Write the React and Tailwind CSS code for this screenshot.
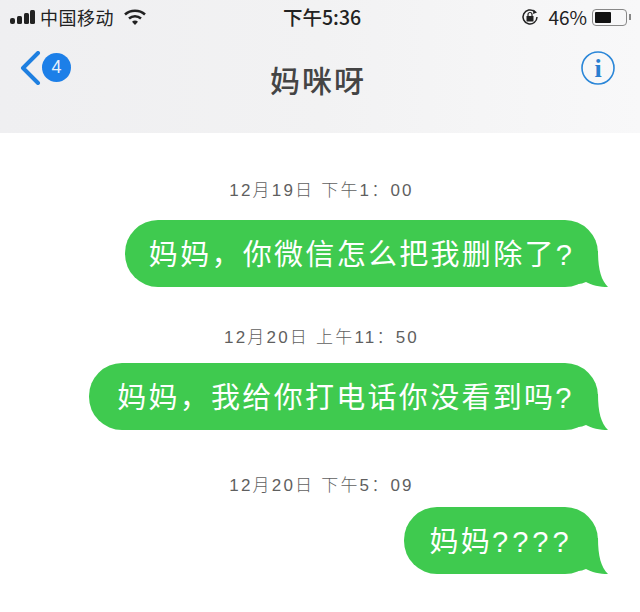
const font = { fontFamily: '"Noto Sans CJK SC", "Liberation Sans", sans-serif' };
const latinFirst = { fontFamily: '"Liberation Sans", "Noto Sans CJK SC", sans-serif' };

function Bubble({ width, className = '', children }) {
  return (
    <div className={`relative ml-auto mr-[42px] h-[67px] pt-[4px] rounded-[33px] bg-[#3fca4f] flex items-center justify-center text-white text-[29px] tracking-[2.3px] ${className}`} style={{ width, ...latinFirst }}>
      <span className="relative z-10">{children}</span>
      <svg className="absolute right-[-10px] bottom-0" width="30" height="36" viewBox="0 0 30 36">
        <path d="M0 0 L20 0 C20 18 23 29 30 36 C22 36 13 34 8 31 C5 32 3 33 0 33 Z" fill="#3fca4f" />
      </svg>
    </div>
  );
}

function Stamp({ children }) {
  return <p className="pt-[1px] pl-[3px] text-center text-[17px] leading-[24px] tracking-[2.2px] text-[#5f5f5f] font-light" style={latinFirst}>{children}</p>;
}

export default function App() {
  return (
    <div className="w-[640px] h-[612px] bg-white overflow-hidden" style={font}>
      <header className="h-[133px] bg-gradient-to-r from-[#efeff1] via-[#f2f2f3] to-[#f8f8f9] px-[10px]">
        {/* status bar */}
        <div className="h-[34px] flex items-center justify-between text-[#222]">
          <div className="flex items-center">
            <svg width="25" height="16" viewBox="0 0 25 16" fill="#222">
              <rect x="0" y="9" width="5" height="6" rx="2" />
              <rect x="7" y="7" width="5" height="8" rx="1.5" />
              <rect x="14" y="4" width="5" height="11" rx="1.5" />
              <rect x="20" y="1" width="5" height="14" rx="1.5" />
            </svg>
            <span className="ml-[5px] text-[18px] tracking-[0.5px]">中国移动</span>
            <svg className="ml-[10px]" width="22" height="16" viewBox="0 0 22 16" fill="none" stroke="#222" strokeWidth="2.6">
              <path d="M1 5.5 C6.5 0.5 15.5 0.5 21 5.5" />
              <path d="M5 9.5 C8.5 6.5 13.5 6.5 17 9.5" />
              <path d="M8 12.8 C9.8 11.2 12.2 11.2 14 12.8 L11 16 Z" fill="#222" stroke="none" />
            </svg>
          </div>
          <span className="absolute left-[283px] text-[19.5px] font-medium">下午5:36</span>
          <div className="flex items-center mr-[-1px]">
            <svg width="18" height="18" viewBox="0 0 18 18" fill="none" stroke="#222" strokeWidth="1.5">
              <path d="M16 9 A7 7 0 1 1 13.5 3.6" />
              <path d="M12.5 1.5 L16 4.5 L12 6 Z" fill="#222" stroke="none" />
              <rect x="5.5" y="8" width="7" height="5.5" fill="#222" stroke="none" />
              <path d="M7 8 V6.5 A2 2 0 0 1 11 6.5 V8" strokeWidth="1.2" />
            </svg>
            <span className="ml-[9px] text-[19px]">46%</span>
            <div className="ml-[5px] w-[35px] h-[17px] rounded-[4px] border border-[#888] p-[2px]">
              <div className="w-[16px] h-full bg-[#111] rounded-[1px]" />
            </div>
            <div className="ml-[2px] w-[2px] h-[6px] bg-[#888]" />
          </div>
        </div>
        {/* nav */}
        <div className="relative flex items-start justify-between pt-[17px] px-[10px]">
          <div className="flex items-center">
            <svg width="22" height="34" viewBox="0 0 22 34" fill="none" stroke="#1e7fe0" strokeWidth="4" strokeLinecap="round" strokeLinejoin="round">
              <path d="M18 2 L3 17 L18 32" />
            </svg>
            <div className="mb-[2px] w-[29px] h-[29px] rounded-full bg-[#1c7fe8] text-[#e8f1fb] text-[18px] flex items-center justify-center" style={{ fontFamily: '"Liberation Sans", sans-serif' }}>4</div>
          </div>
          <h1 className="absolute left-[238px] w-[140px] top-[25px] text-center text-[30px] leading-[40px] font-medium text-[#444] tracking-[2px]">妈咪呀</h1>
          <svg className="mr-[5px]" width="34" height="34" viewBox="0 0 34 34" fill="none">
            <circle cx="17" cy="17" r="16" stroke="#2a86d8" strokeWidth="1.6" />
            <text x="17" y="26" textAnchor="middle" fontSize="26" fontWeight="700" fill="#2a7fd0" fontFamily="Liberation Serif, serif">i</text>
          </svg>
        </div>
      </header>

      <main className="pt-[45px]">
        <Stamp>12月19日 下午1：00</Stamp>
        <div className="mt-[17px]"><Bubble width={473}>妈妈，你微信怎么把我删除了?</Bubble></div>
        <div className="mt-[38px]"><Stamp>12月20日 上午11：50</Stamp></div>
        <div className="mt-[13px]"><Bubble width={509} className="pl-[4px]">妈妈，我给你打电话你没看到吗?</Bubble></div>
        <div className="mt-[43px]"><Stamp>12月20日 下午5：09</Stamp></div>
        <div className="mt-[9px]"><Bubble width={194}>妈妈<span className="tracking-[4px]">????</span></Bubble></div>
      </main>
    </div>
  );
}
